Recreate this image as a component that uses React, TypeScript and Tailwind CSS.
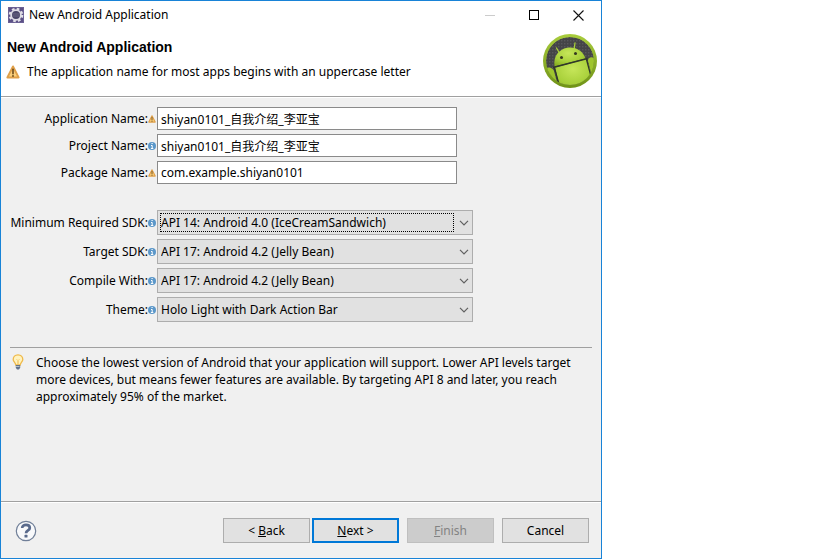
import { useId, type ReactNode } from "react";

function WarningIcon({ className }: { className: string }) {
  return (
    <svg viewBox="0 0 14 14" className={className} aria-hidden="true">
      <path d="M7 1.500 L12.600 12.400 H1.400 Z" fill="#fbd07c" stroke="#e0a04a" strokeWidth="2" strokeLinejoin="round" />
      <path d="M7 4.300 V8.700" stroke="#6b4a1c" strokeWidth="1.600" strokeLinecap="round" />
      <circle cx="7" cy="11" r="0.900" fill="#6b4a1c" />
    </svg>
  );
}

function InfoIcon({ className }: { className: string }) {
  return (
    <svg viewBox="0 0 8 8" className={className} aria-hidden="true">
      <circle cx="4" cy="4" r="4" fill="#5b97c9" />
      <path d="M3.500 1.500 H4.700 M3 3.500 H4.200 V6.200 M2.900 6.500 H5.300" stroke="#fff" strokeWidth="1" fill="none" />
    </svg>
  );
}

function EclipseGearIcon() {
  return (
    <svg viewBox="0 0 16 16" className="size-4" aria-hidden="true">
      <rect width="16" height="16" fill="#5b5086" />
      <rect x="0.5" y="0.5" width="15" height="15" fill="none" stroke="#6b6194" />
      <circle cx="8" cy="8" r="6.200" fill="none" stroke="#e4e2ea" strokeWidth="2.200" strokeDasharray="2.600 2.270" />
      <circle cx="8" cy="8" r="4.900" fill="#4a4668" stroke="#dddbe3" strokeWidth="1.800" />
      <path d="M4.500 7 H11.500 M4.500 9 H11.500" stroke="#77728f" strokeWidth="0.700" />
    </svg>
  );
}

function AndroidBadge() {
  return (
    <svg viewBox="0 0 54 54" className="size-[54px]" aria-hidden="true">
      <defs>
        <radialGradient id="bot" cx="0.45" cy="0.3" r="0.75">
          <stop offset="0" stopColor="#c6e65a" />
          <stop offset="0.6" stopColor="#a8d03a" />
          <stop offset="1" stopColor="#86ad20" />
        </radialGradient>
        <linearGradient id="rim" x1="0" y1="0" x2="0" y2="1">
          <stop offset="0" stopColor="#a9cd3d" />
          <stop offset="1" stopColor="#6f9216" />
        </linearGradient>
        <pattern id="mesh" width="3" height="3" patternUnits="userSpaceOnUse">
          <rect width="3" height="3" fill="#444447" />
          <rect width="1.4" height="1.4" fill="#57575a" />
        </pattern>
        <clipPath id="disc">
          <circle cx="27" cy="27" r="24" />
        </clipPath>
      </defs>
      <circle cx="27" cy="27" r="27" fill="url(#rim)" />
      <g clipPath="url(#disc)">
        <circle cx="27" cy="27" r="24" fill="url(#mesh)" />
        <path d="M13.500 14 L17 20 M32 9 L31 16" stroke="#a8cf38" strokeWidth="1.300" strokeLinecap="round" />
        <path d="M11.500 32.500 C10 22 16 15.500 24 13.800 C32 12.200 40 16.500 42.500 24.500 Z" fill="url(#bot)" />
        <path d="M12 33.500 L43.500 25 L52 50 L18 58 Z" fill="url(#bot)" />
        <path d="M2 35 C5 32 10 34 11 37 L16 56 L2 56 Z" fill="#9fc52e" />
        <path d="M45 27 C44.500 23 50 21.500 53 26 L54 46 L50 46 Z" fill="#9fc52e" />
        <path d="M10 33.500 L44.500 24.500 M11.500 34 L17 54 M43.500 25.500 L49 46" stroke="#303828" strokeWidth="1.300" />
        <circle cx="18.500" cy="23.500" r="1.500" fill="#34391f" />
        <circle cx="32.500" cy="19.500" r="1.500" fill="#34391f" />
      </g>
    </svg>
  );
}

function BulbIcon() {
  return (
    <svg viewBox="0 0 12 16" className="h-4 w-3 shrink-0" aria-hidden="true">
      <path d="M6 0.800 C3 0.800 1.200 2.900 1.200 5.400 C1.200 7.600 3.600 8.600 3.800 11 H8.200 C8.400 8.600 10.800 7.600 10.800 5.400 C10.800 2.900 9 0.800 6 0.800 Z" fill="#fff3bf" stroke="#efb94b" strokeWidth="1.300" />
      <path d="M4.500 5 L5.500 6.500 V10.500 M7.500 5 L6.500 6.500 V10.500" stroke="#f3c765" strokeWidth="0.700" fill="none" />
      <path d="M3.800 11 H8.200 V13.700 L7 15.500 H5 L3.800 13.700 Z" fill="#64748b" />
      <path d="M4 12.500 H7.500" stroke="#c8d2de" strokeWidth="0.800" />
    </svg>
  );
}

function HelpIcon() {
  return (
    <svg viewBox="0 0 22 22" className="block size-[22px]" aria-hidden="true">
      <circle cx="11" cy="11" r="9.700" fill="#f8f9fb" stroke="#707f98" strokeWidth="1.200" />
      <path d="M7.200 8 C7.200 3.900 14.800 4 14.800 8 C14.800 10.600 11 10.300 11 13.300" fill="none" stroke="#596a8c" strokeWidth="2.700" />
      <rect x="9.500" y="14.800" width="3" height="2.700" rx="0.600" fill="#596a8c" />
    </svg>
  );
}

type Status = "warning" | "info";

function Row({ id, label, status, children }: { id: string; label: string; status: Status; children: ReactNode }) {
  return (
    <div className="grid grid-cols-[147px_9px_minmax(0,1fr)] items-center">
      <label htmlFor={id} className="text-right whitespace-nowrap">
        {label}
      </label>
      {status === "warning" ? <WarningIcon className="size-2" /> : <InfoIcon className="size-2" />}
      {children}
    </div>
  );
}

function TextField({ label, status, value }: { label: string; status: Status; value: string }) {
  const id = useId();
  return (
    <Row id={id} label={label} status={status}>
      <input
        id={id}
        type="text"
        defaultValue={value}
        className="h-[23px] w-full max-w-[300px] border border-[#8a8a8a] bg-white px-[3px] outline-none"
      />
    </Row>
  );
}

function SelectField({ label, value, focused = false }: { label: string; value: string; focused?: boolean }) {
  const id = useId();
  return (
    <Row id={id} label={label} status="info">
      <div className="relative w-full max-w-[316px]">
        <select
          id={id}
          defaultValue={value}
          className="block h-[25px] w-full appearance-none border border-[#adadad] bg-[#e1e1e1] pr-5 pl-[3px] outline-none"
        >
          <option>{value}</option>
        </select>
        {focused && (
          <span className="pointer-events-none absolute inset-y-[3px] right-[19px] left-[3px] border border-dotted border-black" />
        )}
        <svg viewBox="0 0 10 6" className="pointer-events-none absolute top-[10px] right-1 h-1.5 w-2.5" aria-hidden="true">
          <path d="M1 0.800 L5 4.800 L9 0.800" fill="none" stroke="#606060" strokeWidth="1.200" />
        </svg>
      </div>
    </Row>
  );
}

const buttonBase = "h-[25px] w-[87px] text-center";

export default function App() {
  return (
    <div className="min-h-screen bg-white font-['Noto_Sans','Noto_Sans_CJK_SC',sans-serif] text-[12px] leading-4 text-black">
      <main className="flex min-h-screen w-full max-w-[602px] flex-col border border-[#1883d7] bg-[#f0f0f0]">
        <header className="border-b border-[#a0a0a0] bg-white">
          <div className="flex h-7 items-center pl-[7px]">
            <EclipseGearIcon />
            <span className="ml-[5px]">New Android Application</span>
            <div className="ml-auto flex">
              <button type="button" disabled aria-label="Minimize" className="grid h-7 w-11 place-items-center">
                <span className="h-px w-2.5 bg-[#cccccc]" />
              </button>
              <button type="button" aria-label="Maximize" className="grid h-7 w-11 place-items-center">
                <span className="size-2.5 border border-black" />
              </button>
              <button type="button" aria-label="Close" className="grid h-7 w-[45px] place-items-center">
                <svg viewBox="0 0 11 11" className="size-[11px]" aria-hidden="true">
                  <path d="M0.500 0.500 L10.500 10.500 M10.500 0.500 L0.500 10.500" stroke="#111" strokeWidth="1.100" />
                </svg>
              </button>
            </div>
          </div>
          <div className="flex h-[67px] justify-between pr-1 pl-[5px]">
            <div className="pt-2.5">
              <h1 className="pl-px font-['Liberation_Sans',sans-serif] text-[14px] leading-4 font-bold">New Android Application</h1>
              <p className="mt-[9px] flex items-center gap-[7px]">
                <WarningIcon className="size-3.5" />
                The application name for most apps begins with an uppercase letter
              </p>
            </div>
            <div className="pt-[5px]">
              <AndroidBadge />
            </div>
          </div>
        </header>

        <form className="flex flex-1 flex-col border-t border-white">
          <div className="mt-[9px] flex flex-col gap-1">
            <TextField label="Application Name:" status="warning" value="shiyan0101_自我介绍_李亚宝" />
            <TextField label="Project Name:" status="info" value="shiyan0101_自我介绍_李亚宝" />
            <TextField label="Package Name:" status="warning" value="com.example.shiyan0101" />
          </div>
          <div className="mt-[26px] flex flex-col gap-1">
            <SelectField label="Minimum Required SDK:" value="API 14: Android 4.0 (IceCreamSandwich)" focused />
            <SelectField label="Target SDK:" value="API 17: Android 4.2 (Jelly Bean)" />
            <SelectField label="Compile With:" value="API 17: Android 4.2 (Jelly Bean)" />
            <SelectField label="Theme:" value="Holo Light with Dark Action Bar" />
          </div>

          <section className="mx-[9px] mt-[25px] flex gap-3 border-t border-[#a0a0a0] pt-1.5 pr-2 pl-[2px]">
            <BulbIcon />
            <p className="max-w-[550px] leading-[17px]">
              Choose the lowest version of Android that your application will support. Lower API levels target
              more devices, but means fewer features are available. By targeting API 8 and later, you reach
              approximately 95% of the market.
            </p>
          </section>

          <footer className="mt-auto border-t border-[#a0a0a0]">
            <div className="flex h-14 items-center border-t border-white pr-3 pl-3.5">
              <button type="button" aria-label="Help">
                <HelpIcon />
              </button>
              <div className="ml-auto flex">
                <button type="button" className={`${buttonBase} border border-[#adadad] bg-[#e1e1e1]`}>
                  &lt; <u>B</u>ack
                </button>
                <button type="button" className={`${buttonBase} ml-0.5 border-2 border-[#0078d7] bg-[#e1e1e1]`}>
                  <u>N</u>ext &gt;
                </button>
                <button type="button" disabled className={`${buttonBase} ml-2 border border-[#bfbfbf] bg-[#cccccc] text-[#838383]`}>
                  <u>F</u>inish
                </button>
                <button type="button" className={`${buttonBase} ml-2 border border-[#adadad] bg-[#e1e1e1]`}>
                  Cancel
                </button>
              </div>
            </div>
          </footer>
        </form>
      </main>
    </div>
  );
}
